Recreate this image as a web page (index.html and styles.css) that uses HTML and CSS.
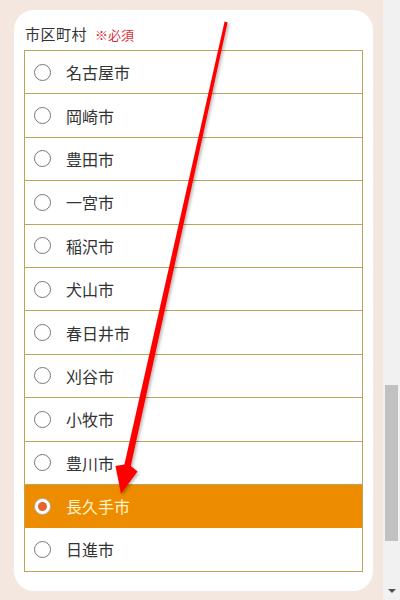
FILE: index.html
```html
<!DOCTYPE html>
<html lang="ja">
<head>
<meta charset="utf-8">
<link rel="stylesheet" href="styles.css">
</head>
<body>
<div class="page">
  <main class="main">
    <section class="card">
      <div class="title">市区町村<span class="req">※必須</span></div>
      <ul class="list">
        <li class="row"><span class="radio"></span><span class="label">名古屋市</span></li>
        <li class="row"><span class="radio"></span><span class="label">岡崎市</span></li>
        <li class="row"><span class="radio"></span><span class="label">豊田市</span></li>
        <li class="row"><span class="radio"></span><span class="label">一宮市</span></li>
        <li class="row"><span class="radio"></span><span class="label">稲沢市</span></li>
        <li class="row"><span class="radio"></span><span class="label">犬山市</span></li>
        <li class="row"><span class="radio"></span><span class="label">春日井市</span></li>
        <li class="row"><span class="radio"></span><span class="label">刈谷市</span></li>
        <li class="row"><span class="radio"></span><span class="label">小牧市</span></li>
        <li class="row"><span class="radio"></span><span class="label">豊川市</span></li>
        <li class="row selected"><span class="radio"><span class="dot"></span></span><span class="label">長久手市</span></li>
        <li class="row"><span class="radio"></span><span class="label">日進市</span></li>
      </ul>
    </section>
  </main>
  <aside class="scrollbar">
    <div class="thumb"></div>
    <div class="down"></div>
  </aside>
</div>
<svg class="arrow" width="400" height="600" viewBox="0 0 400 600">
  <defs>
    <filter id="sh" x="-20%" y="-5%" width="140%" height="110%">
      <feDropShadow dx="1.5" dy="1.5" stdDeviation="1.5" flood-color="#000" flood-opacity="0.3"/>
    </filter>
  </defs>
  <polygon filter="url(#sh)" fill="#ff0000" points="224.6,21.6 227.6,22.4 130.8,466 137.5,471.5 121,494 115.5,466 124.4,464.6"/>
</svg>
</body>
</html>
```
FILE: styles.css
```css
* { box-sizing: border-box; }
html, body { margin: 0; padding: 0; }
body {
  width: 400px;
  height: 600px;
  overflow: hidden;
  background: #f3e7df;
  font-family: "Noto Sans CJK JP", "Noto Sans", sans-serif;
  color: #333;
  position: relative;
}
.page {
  display: flex;
  width: 400px;
  height: 600px;
}
.main {
  flex: 1;
  padding: 10px 10px 0 14px;
}
.card {
  width: 359px;
  height: 581px;
  background: #fff;
  border-radius: 20px;
  padding: 11px 10px 0 10px;
}
.title {
  font-size: 15px;
  line-height: 25px;
  height: 25px;
  margin: 0 0 4px 1px;
  letter-spacing: 0.5px;
}
.req {
  color: #d8323a;
  font-size: 13px;
  margin-left: 8px;
  letter-spacing: 0;
}
.list {
  list-style: none;
  margin: 0;
  padding: 0;
  border: 1px solid #bba55a;
  border-bottom: 0;
}
.row {
  height: 43.4px;
  border-bottom: 1px solid #bba55a;
  display: flex;
  align-items: center;
  padding-left: 9px;
  background: #fff;
}
.radio {
  width: 17px;
  height: 17px;
  border: 1px solid #777;
  border-radius: 50%;
  background: #fff;
  display: flex;
  align-items: center;
  justify-content: center;
  flex: none;
}
.dot {
  width: 9px;
  height: 9px;
  border-radius: 50%;
  background: #e7632b;
}
.label {
  margin-left: 15px;
  font-size: 16px;
  line-height: 20px;
  color: #333;
}
.row.selected {
  background: #ee8c00;
  border-bottom-color: #ee8c00;
}
.row.selected .label { color: #fff5cc; }
.row.selected .radio { border-color: #aaa; }
.scrollbar {
  width: 17px;
  height: 600px;
  background: #f1f1f1;
  display: flex;
  flex-direction: column;
  align-items: center;
}
.thumb {
  margin-top: 385px;
  width: 13px;
  height: 156px;
  background: #c1c1c1;
}
.down {
  margin-top: auto;
  margin-bottom: 7px;
  width: 0;
  height: 0;
  border-left: 4px solid transparent;
  border-right: 4px solid transparent;
  border-top: 4px solid #505050;
}
.arrow {
  position: absolute;
  left: 0;
  top: 0;
  pointer-events: none;
}
```
